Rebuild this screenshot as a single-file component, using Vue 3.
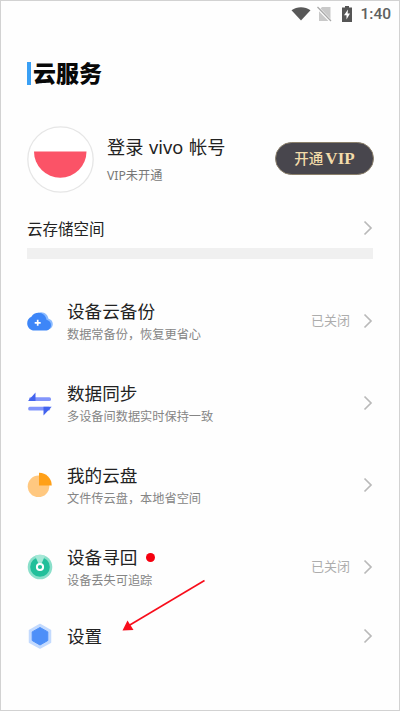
<script setup>
const rows = [
  { icon: 'cloud', title: '设备云备份', sub: '数据常备份，恢复更省心', status: '已关闭' },
  { icon: 'sync', title: '数据同步', sub: '多设备间数据实时保持一致' },
  { icon: 'disk', title: '我的云盘', sub: '文件传云盘，本地省空间' },
  { icon: 'find', title: '设备寻回', sub: '设备丢失可追踪', status: '已关闭', dot: true },
  { icon: 'settings', title: '设置' },
]
</script>

<template>
  <div class="screen">
    <div class="statusbar">
      <svg class="wifi" width="20" height="14" viewBox="0 0 20 14"><path d="M.5 3.2C6-.7 14-.7 19.500 3.200L10 13.500z" fill="#585858" /></svg>
      <svg class="sim" width="15" height="16" viewBox="0 0 15 16">
        <path d="M5 1h8.500v14H2V4z" fill="#c9c9c9" />
        <path d="M.5 1.500 14 15.500" stroke="#fff" stroke-width="3" />
        <path d="M.5 1 14 15" stroke="#a8a8a8" stroke-width="1.300" />
      </svg>
      <svg class="battery" width="10" height="16" viewBox="0 0 10 16">
        <path d="M3 0h4v1.500h3V16H0V1.500h3z" fill="#555" />
        <path d="M6 3.500 2 9.300h2.500V13.500L8 7.500H5.600z" fill="#fff" />
      </svg>
      <span class="time">1:40</span>
    </div>

    <h1 class="heading"><i class="mark"></i><span>云服务</span></h1>

    <section class="account">
      <div class="avatar">
        <svg width="67" height="67" viewBox="0 0 67 67">
          <circle cx="33.500" cy="33.500" r="32.700" fill="#fff" stroke="#e6e6e6" stroke-width="1.300" />
          <path d="M7 25.500H59.500A26.200 26.200 0 0 1 7 25.500z" fill="#fb5367" />
        </svg>
      </div>
      <div class="who">
        <div class="name">登录 vivo 帐号</div>
        <div class="vip-state">VIP未开通</div>
      </div>
      <button class="vip">开通<b>VIP</b></button>
    </section>

    <section class="storage">
      <span>云存储空间</span>
      <svg class="chevron" width="10" height="16" viewBox="0 0 10 16"><path d="M1.500 1.500 8 8l-6.500 6.500" /></svg>
    </section>
    <div class="track"></div>

    <ul class="list">
      <li v-for="row in rows" :key="row.icon" class="row" :class="{ single: !row.sub }">
        <svg v-if="row.icon === 'cloud'" class="icon" width="26" height="26" viewBox="0 0 26 26">
          <path d="M10 21.500a6 6 0 0 1-2-1.200C4 15 6 4.500 14 4.200c4 0 7 2.800 7.500 6.600 2.600.6 4.300 2.600 4.300 5.200 0 3-2.300 5.500-5.300 5.500z" fill="#8abaff" />
          <path d="M7.500 22.500C3.200 22.500.2 19.300.2 15.200c0-3 1.700-5.300 4.200-6.400C5.800 6 8.400 4.700 11.400 4.700c4.300 0 7.600 3 8.100 7 2.500.5 4.500 2.500 4.500 5.200 0 3.100-2.400 5.600-5.600 5.600z" fill="#3d86f8" />
          <path d="M10.700 11.800v6M7.700 14.800h6" stroke="#fff" stroke-width="1.700" />
        </svg>
        <svg v-else-if="row.icon === 'sync'" class="icon" width="26" height="26" viewBox="0 0 26 26">
          <rect x="2" y="7.300" width="22" height="3.800" rx="1.600" fill="#8295fb" />
          <path d="M1 11.100 8.500 2.500v8.600z" fill="#4263ee" />
          <rect x="1.200" y="16.700" width="22" height="3.800" rx="1.600" fill="#8295fb" />
          <path d="M24.700 16.700H16.500V25.500z" fill="#4263ee" />
        </svg>
        <svg v-else-if="row.icon === 'disk'" class="icon" width="26" height="26" viewBox="0 0 26 26">
          <circle cx="11.500" cy="14.300" r="10.800" fill="#ffc880" />
          <path d="M12 .7A12.500 12.500 0 0 1 24.700 13.500H12z" fill="#ffa018" />
        </svg>
        <svg v-else-if="row.icon === 'find'" class="icon" width="26" height="26" viewBox="0 0 26 26">
          <circle cx="13" cy="13" r="12.300" fill="#8adfca" />
          <circle cx="13" cy="13" r="9.800" fill="#21bf9a" />
          <path d="M13 13 8 1.800a12.300 12.300 0 0 1 10 0z" fill="#a5e8d7" />
          <circle cx="13" cy="13" r="3.100" fill="#21bf9a" stroke="#fff" stroke-width="2" />
        </svg>
        <svg v-else class="icon" width="26" height="26" viewBox="0 0 26 26">
          <path d="M13 1.500 23.500 7.300v12L13 25 2.500 19.300v-12z" fill="#c3dafe" stroke="#c3dafe" stroke-width="1.500" stroke-linejoin="round" />
          <path d="M13 4.500 20.800 8.900v8.600L13 22 5.200 17.500V8.900z" fill="#4d8ff8" stroke="#4d8ff8" stroke-linejoin="round" />
        </svg>
        <div class="text">
          <div class="title">{{ row.title }}<i v-if="row.dot" class="dot"></i></div>
          <div v-if="row.sub" class="sub">{{ row.sub }}</div>
        </div>
        <span v-if="row.status" class="status">{{ row.status }}</span>
        <svg class="chevron" width="10" height="16" viewBox="0 0 10 16"><path d="M1.500 1.500 8 8l-6.500 6.500" /></svg>
      </li>
    </ul>

    <svg class="pointer" width="84" height="54" viewBox="0 0 84 54">
      <path d="M82.500 2.500 7 47.500" stroke="#f80d1b" stroke-width="1.600" />
      <path d="M.5 52.500 5.500 42.500 11.500 52z" fill="#f80d1b" />
    </svg>
  </div>
</template>

<style>
body {
  background: #fefefe;
}
</style>

<style scoped>
.screen {
  position: relative;
  box-sizing: border-box;
  width: 400px;
  height: 711px;
  padding: 0 26px;
  border: 1px solid #d2d2d2;
  overflow: hidden;
  background: #fefefe;
  color: #222;
  font-family: "Noto Sans", "Noto Sans CJK SC", sans-serif;
}
svg {
  display: block;
  flex: none;
}
.statusbar {
  display: flex;
  align-items: center;
  justify-content: flex-end;
  height: 26px;
  margin-right: -18px;
}
.sim {
  margin-left: 6px;
}
.battery {
  margin-left: 10px;
}
.time {
  margin-left: 8px;
  font: 500 15.500px/26px Roboto, sans-serif;
  color: #606060;
}
.heading {
  display: flex;
  align-items: center;
  height: 24px;
  margin: 34px 0 0;
  font: 900 23px/24px "Noto Sans CJK SC", sans-serif;
  color: #080808;
}
.heading span {
  margin-top: -3px;
}
.mark {
  width: 4px;
  height: 23px;
  margin-right: 2px;
  background: #3aa0f5;
}
.account {
  display: flex;
  align-items: center;
  height: 67px;
  margin-top: 41px;
}
.who {
  flex: 1;
  margin-left: 13px;
}
.name {
  font-size: 18.200px;
  line-height: 28px;
  word-spacing: 1px;
}
.vip-state {
  margin-top: 4px;
  font-size: 12.200px;
  line-height: 22px;
  color: #777;
}
.vip {
  box-sizing: border-box;
  width: 99px;
  height: 33px;
  margin: -3px -1px 0 0;
  padding: 0;
  border: 1.500px solid #8a7f6a;
  border-radius: 17px;
  background: #48464d;
  color: #f3dcaa;
  font: 500 14.500px/28px "Noto Sans CJK SC", sans-serif;
  white-space: nowrap;
}
.vip b {
  margin-left: 2px;
  font: bold 17px/28px "Liberation Serif", serif;
}
.storage {
  display: flex;
  align-items: center;
  justify-content: space-between;
  height: 30px;
  margin-top: 20px;
  font-size: 15.500px;
}
.chevron {
  fill: none;
  stroke: #b9b9b9;
  stroke-width: 1.700;
}
.track {
  height: 11px;
  margin-top: 5px;
  background: #f0f0f0;
}
.list {
  margin: 21px 0 0;
  padding: 0;
  list-style: none;
}
.row {
  display: flex;
  align-items: center;
  height: 82.100px;
}
.row.single {
  height: 56px;
}
.icon {
  margin-right: 14px;
}
.text {
  flex: 1;
}
.row:not(.single) .text {
  padding-top: 1px;
}
.title {
  display: flex;
  align-items: center;
  font-size: 17.600px;
  line-height: 26px;
}
.dot {
  width: 9px;
  height: 9px;
  margin-left: 9px;
  border-radius: 50%;
  background: #f5000f;
}
.sub {
  margin-top: 1px;
  font-size: 12.200px;
  line-height: 20px;
  color: #858585;
}
.status {
  margin: -3px 13px 0 0;
  font-size: 13px;
  color: #adadad;
}
.pointer {
  position: absolute;
  left: 121px;
  top: 577px;
}
</style>
